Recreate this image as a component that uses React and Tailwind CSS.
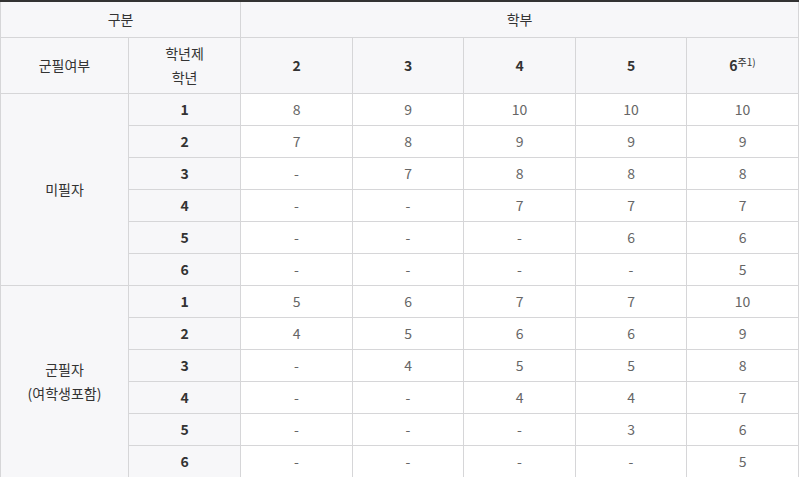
import React from "react";

const cols = [128, 112, 112, 111, 112, 111, 112];

const groups = [
  {
    label: ["미필자"],
    rows: [
      ["1", "8", "9", "10", "10", "10"],
      ["2", "7", "8", "9", "9", "9"],
      ["3", "-", "7", "8", "8", "8"],
      ["4", "-", "-", "7", "7", "7"],
      ["5", "-", "-", "-", "6", "6"],
      ["6", "-", "-", "-", "-", "5"],
    ],
  },
  {
    label: ["군필자", "(여학생포함)"],
    rows: [
      ["1", "5", "6", "7", "7", "10"],
      ["2", "4", "5", "6", "6", "9"],
      ["3", "-", "4", "5", "5", "8"],
      ["4", "-", "-", "4", "4", "7"],
      ["5", "-", "-", "-", "3", "6"],
      ["6", "-", "-", "-", "-", "5"],
    ],
  },
];

// header cells: weight is set per cell so bold/normal don't fight
const th = "border border-[#d6d6d8] bg-[#f7f7f9] text-[#333] text-center p-0";
const td = "border border-[#d6d6d8] bg-white text-[#666] text-center p-0 h-[32px]";

export default function App() {
  return (
    <div
      className="w-[799px] h-[477px] overflow-hidden bg-white text-[14px]"
      style={{ fontFamily: '"Noto Sans CJK KR", "Noto Sans", sans-serif' }}
    >
      <table className="table-fixed border-collapse w-[798px] border-t-2 border-t-[#333]">
        <colgroup>
          {cols.map((w, i) => (
            <col key={i} style={{ width: w }} />
          ))}
        </colgroup>
        <thead>
          <tr className="h-[36px]">
            <th colSpan={2} className={th + " font-normal border-t-2 border-t-[#333]"}>
              구분
            </th>
            <th colSpan={5} className={th + " font-normal border-t-2 border-t-[#333]"}>
              학부
            </th>
          </tr>
          <tr className="h-[56px]">
            <th className={th + " font-normal"}>군필여부</th>
            <th className={th + " font-normal leading-[24px]"}>
              학년제
              <br />
              학년
            </th>
            {["2", "3", "4", "5"].map((n) => (
              <th key={n} className={th + " font-bold"}>
                {n}
              </th>
            ))}
            <th className={th + " font-normal"}>
              <span className="font-bold">6</span>
              <sup className="text-[10px] font-normal">주1)</sup>
            </th>
          </tr>
        </thead>
        <tbody>
          {groups.map((g) =>
            g.rows.map((r, i) => (
              <tr key={g.label[0] + i}>
                {i === 0 && (
                  <th rowSpan={6} className={th + " font-normal leading-[24px]"}>
                    {g.label.map((l, k) => (
                      <div key={k}>{l}</div>
                    ))}
                  </th>
                )}
                <th className={th + " font-bold h-[32px]"}>{r[0]}</th>
                {r.slice(1).map((v, j) => (
                  <td key={j} className={td}>
                    {v}
                  </td>
                ))}
              </tr>
            ))
          )}
        </tbody>
      </table>
    </div>
  );
}
